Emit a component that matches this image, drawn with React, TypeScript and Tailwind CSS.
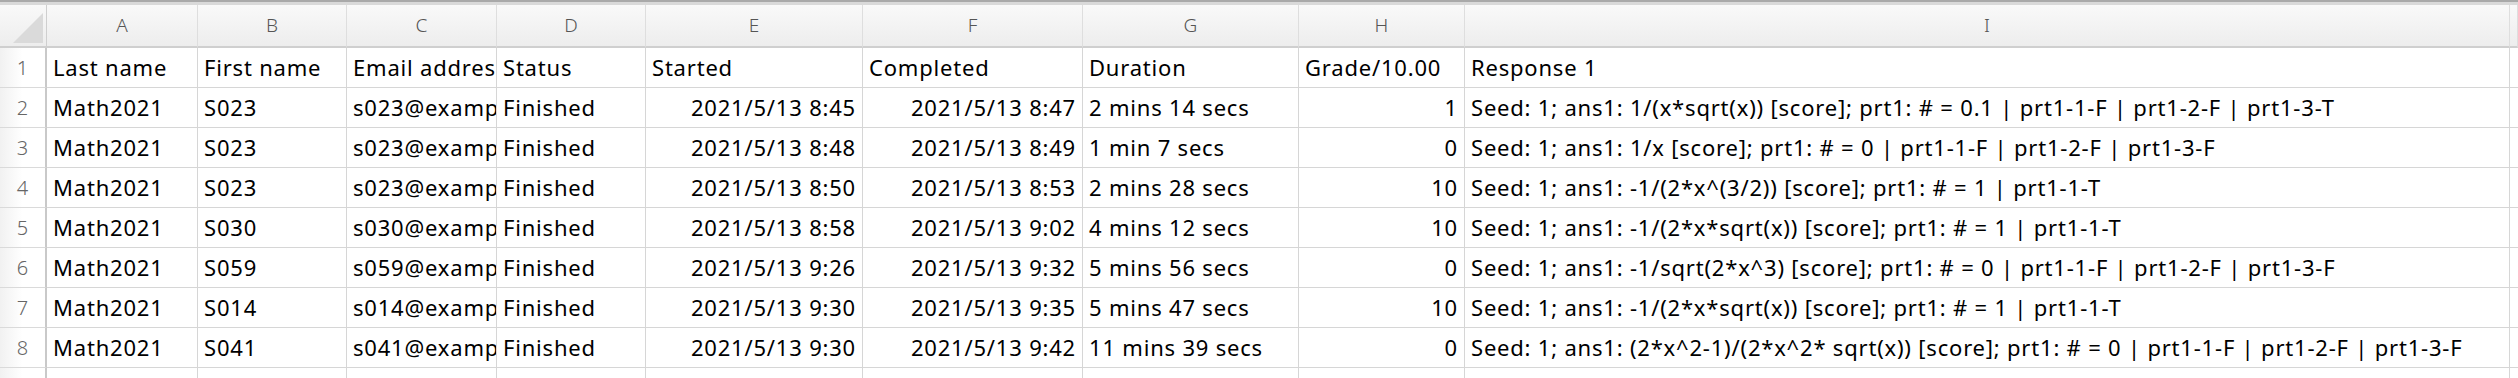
const COLS = ["A", "B", "C", "D", "E", "F", "G", "H", "I", ""];

// which columns are right aligned (dates + grade)
const RIGHT = [false, false, false, false, true, true, false, true, false, false];

const ROWS: string[][] = [
  ["Last name", "First name", "Email address", "Status", "Started", "Completed", "Duration", "Grade/10.00", "Response 1", ""],
  ["Math2021", "S023", "s023@example.com", "Finished", "2021/5/13 8:45", "2021/5/13 8:47", "2 mins 14 secs", "1", "Seed: 1; ans1: 1/(x*sqrt(x)) [score]; prt1: # = 0.1 | prt1-1-F | prt1-2-F | prt1-3-T", ""],
  ["Math2021", "S023", "s023@example.com", "Finished", "2021/5/13 8:48", "2021/5/13 8:49", "1 min 7 secs", "0", "Seed: 1; ans1: 1/x [score]; prt1: # = 0 | prt1-1-F | prt1-2-F | prt1-3-F", ""],
  ["Math2021", "S023", "s023@example.com", "Finished", "2021/5/13 8:50", "2021/5/13 8:53", "2 mins 28 secs", "10", "Seed: 1; ans1: -1/(2*x^(3/2)) [score]; prt1: # = 1 | prt1-1-T", ""],
  ["Math2021", "S030", "s030@example.com", "Finished", "2021/5/13 8:58", "2021/5/13 9:02", "4 mins 12 secs", "10", "Seed: 1; ans1: -1/(2*x*sqrt(x)) [score]; prt1: # = 1 | prt1-1-T", ""],
  ["Math2021", "S059", "s059@example.com", "Finished", "2021/5/13 9:26", "2021/5/13 9:32", "5 mins 56 secs", "0", "Seed: 1; ans1: -1/sqrt(2*x^3) [score]; prt1: # = 0 | prt1-1-F | prt1-2-F | prt1-3-F", ""],
  ["Math2021", "S014", "s014@example.com", "Finished", "2021/5/13 9:30", "2021/5/13 9:35", "5 mins 47 secs", "10", "Seed: 1; ans1: -1/(2*x*sqrt(x)) [score]; prt1: # = 1 | prt1-1-T", ""],
  ["Math2021", "S041", "s041@example.com", "Finished", "2021/5/13 9:30", "2021/5/13 9:42", "11 mins 39 secs", "0", "Seed: 1; ans1: (2*x^2-1)/(2*x^2* sqrt(x)) [score]; prt1: # = 0 | prt1-1-F | prt1-2-F | prt1-3-F", ""],
  ["Math2021", "S052", "s052@example.com", "Finished", "2021/5/13 9:31", "2021/5/13 9:44", "12 mins 51 secs", "10", "Seed: 1; ans1: -1/(2*x^(3/2)) [score]; prt1: # = 1 | prt1-1-T", ""],
];

const GRID =
  "grid grid-cols-[47px_151px_149px_150px_149px_217px_220px_216px_166px_1045px_1fr]";

export default function App() {
  return (
    <div
      className="h-[378px] w-full overflow-hidden bg-white text-[22px] tracking-[0.8px] text-black"
      style={{ fontFamily: '"Noto Sans", "Noto Sans CJK JP", sans-serif' }}
    >
      <div className="h-[2px] bg-[#a9a9a9]" />
      <div className="h-[3px] bg-[#d9d9d9]" />

      {/* column letters */}
      <div className={`${GRID} h-[43px]`}>
        <div className="relative border-r border-b-2 border-[#cfcfcf] bg-linear-to-b from-[#f9f9f9] to-[#ededed]">
          <svg className="absolute left-[13px] top-[8px]" width="30" height="30" viewBox="0 0 30 30">
            <polygon points="30,0 30,30 0,30" fill="#dadada" />
          </svg>
        </div>
        {COLS.map((c, i) => (
          <div
            key={i}
            className="flex items-center justify-center border-r border-b-2 border-r-[#dedede] border-b-[#cfcfcf] bg-linear-to-b from-[#f9f9f9] to-[#ededed] text-[19px] font-light tracking-normal text-[#555]"
          >
            {c}
          </div>
        ))}
      </div>

      {ROWS.map((row, r) => (
        <div key={r} className={`${GRID} h-[40px]`}>
          <div className="flex items-center justify-center border-r-2 border-b border-r-[#c9c9c9] border-b-[#dadada] bg-linear-to-r from-[#f1f1f1] via-white to-white text-[20px] font-light tracking-normal text-[#666]">
            {r + 1}
          </div>
          {row.map((cell, i) => (
            <div
              key={i}
              className={`flex items-center overflow-hidden whitespace-nowrap border-r border-b border-[#d6d6d6] px-[6px] ${
                RIGHT[i] && r > 0 ? "justify-end" : "justify-start"
              }`}
            >
              <span className={RIGHT[i] && r > 0 ? "" : "shrink-0"}>{cell}</span>
            </div>
          ))}
        </div>
      ))}
    </div>
  );
}
